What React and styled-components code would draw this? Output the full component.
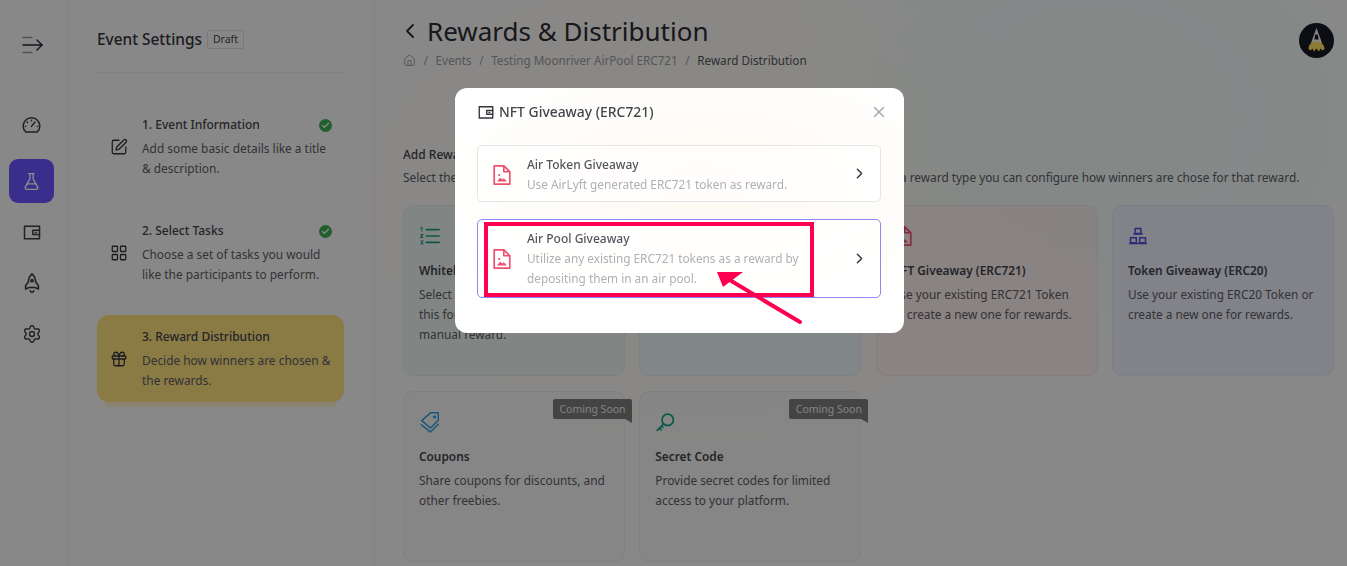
import React from "react";
import styled, { createGlobalStyle } from "styled-components";
import { ChevronLeft, ChevronRight, FlaskConical, Gift, House, LayoutGrid, Settings, SquarePen, Tags, X, Check } from "lucide-react";

const Global = createGlobalStyle`
  html, body { margin: 0; height: 100%; overflow: hidden; }
  body { font-family: "Noto Sans", "Open Sans", sans-serif; color: #2b2b33; background: #f7f7f7; }
  * { box-sizing: border-box; }
`;

const Page = styled.div`
  display: flex; width: 1347px; height: 566px; overflow: hidden;
  background:
    radial-gradient(ellipse 330px 260px at 1090px 120px, #eef8f6 0%, rgba(238,248,246,0) 100%),
    radial-gradient(ellipse 380px 260px at 700px 200px, #fff6ea 0%, rgba(255,246,234,0) 100%),
    #f8f8f8;
`;
const Rail = styled.nav`
  width: 68px; flex: none; border-right: 1px solid #ececec; display: flex; flex-direction: column; align-items: center; padding-top: 33px;
`;
const Toggle = styled.div`height: 24px; color: #20203c; margin-bottom: 46px; margin-left: -4px;`;
const RailItem = styled.div`
  width: 45px; height: 44px; border-radius: 9px; display: flex; align-items: center; justify-content: center; margin-bottom: ${p => (p.$first ? "12px" : "7px")};
  margin-left: -4px;
  color: ${p => (p.$active ? "#fff" : "#3c3c44")};
  background: ${p => (p.$active ? "#6b55ff" : "transparent")};
`;
const Panel = styled.aside`
  width: 307px; flex: none; border-right: 1px solid #ececec; padding: 28px 30px 0 29px;
`;
const PanelHead = styled.div`display: flex; align-items: center; gap: 5px; height: 22px;`;
const PanelTitle = styled.div`font-size: 15.4px; font-weight: 500; color: #33333b;`;
const Draft = styled.span`
  border: 1px solid #dcdcdc; border-radius: 2px; font-size: 10.5px; line-height: 17px; width: 37px; text-align: center; color: #44444c;
`;
const Divider = styled.hr`border: 0; border-top: 1px solid #ececec; margin: 22px 0 30px;`;
const StepList = styled.div`display: flex; flex-direction: column; gap: 19px;`;
const Step = styled.div`
  height: 87px; border-radius: 12px; padding: 0 12px 0 13px; display: flex; align-items: center; gap: 14px;
  background: ${p => (p.$active ? "#fbde7d" : "transparent")};
  box-shadow: ${p => (p.$active ? "0 13px 0 -8px rgba(251,222,125,.35)" : "none")};
  color: #33333b;
`;
const StepBody = styled.div`flex: 1; min-width: 0;`;
const StepTitle = styled.div`
  display: flex; justify-content: space-between; align-items: center; font-size: 12px; font-weight: 500; line-height: 20px; color: #44444c; margin-bottom: 3px;
`;
const StepText = styled.div`font-size: 11.9px; line-height: 20px; color: #5c5c64; white-space: nowrap;`;
const Done = styled.span`
  width: 13px; height: 13px; border-radius: 50%; background: #3fae55; display: inline-flex; align-items: center; justify-content: center; color: #fff;
`;
const Main = styled.main`flex: 1; min-width: 0; padding: 12px 13px 0 28px;`;
const Header = styled.header`display: flex; justify-content: space-between; align-items: flex-start;`;
const TitleRow = styled.div`display: flex; align-items: center; gap: 5px; margin-left: -5px;`;
const Title = styled.h1`margin: 0; font-size: 26px; line-height: 38px; font-weight: 400; color: #2b2b33;`;
const Crumbs = styled.div`display: flex; align-items: center; gap: 7.6px; font-size: 11.7px; line-height: 20px; color: #9a9aa2;`;
const CrumbNow = styled.span`color: #55555d;`;
const Avatar = styled.div`width: 35px; height: 35px; margin-top: 11px;`;
const SectionTitle = styled.div`font-size: 12px; font-weight: 500; line-height: 20px; color: #44444c; margin-top: 75px;`;
const SectionText = styled.div`font-size: 11.85px; line-height: 20px; color: #5c5c64; margin-top: 2px; white-space: nowrap;`;
const Grid = styled.div`
  display: grid; grid-template-columns: repeat(4, 222px); gap: 15px 14.33px; margin-top: 18px;
`;
const Card = styled.div`
  position: relative; height: 171px; padding: 18px 14px 0 15px; border-radius: 10px; border: 1px solid rgba(225,228,232,.7);
  background: ${p => p.$tint};
`;
const CardIcon = styled.div`height: 24px; margin-bottom: 12px; display: flex; align-items: center; color: ${p => p.$color};`;
const CardTitle = styled.div`font-size: 11.85px; font-weight: 600; line-height: 20px; color: #44444c; white-space: nowrap;`;
const CardText = styled.div`font-size: 11.85px; line-height: 20px; color: #5c5c64; margin-top: 4px;`;
const Ribbon = styled.div`
  position: absolute; top: 7px; right: -8px; height: 20px; width: 79px; background: #7c7c7c; border-radius: 2px 2px 0 2px; color: #eee; font-size: 10.5px; line-height: 20px; text-align: center;
  &::after { content: ""; position: absolute; right: 0; top: 20px; border-top: 4px solid #7c7c7c; border-left: 7px solid transparent; }
`;
const Overlay = styled.div`position: fixed; inset: 0; background: rgba(0,0,0,.45);`;
const Modal = styled.section`
  position: absolute; left: 455px; top: 88px; width: 449px; height: 245px; border-radius: 12px; padding: 14px 23px 0;
  background: radial-gradient(ellipse 280px 140px at 55% 40%, #fdf9f2 0%, #fff 100%), #fff;
`;
const ModalHead = styled.div`display: flex; align-items: center; height: 20px; gap: 4px; margin-left: -1px; color: #33333b;`;
const ModalTitle = styled.div`flex: 1; font-size: 13.9px; font-weight: 500; color: #44444c; line-height: 20px;`;
const Close = styled.span`color: #a0a0a8; display: flex; margin-right: -7px;`;
const Options = styled.div`display: flex; flex-direction: column; gap: 17px; margin-top: 23px; margin-left: -1px;`;
const Option = styled.div`
  display: flex; align-items: center; width: 404px; height: ${p => (p.$tall ? "79px" : "57px")}; padding: ${p => (p.$tall ? "0" : "2px")} 13px 0 13px; gap: 14px; border-radius: 5px;
  background: rgba(255,255,255,.7);
  border: 1px solid ${p => (p.$tall ? "#8f86f5" : "#e6e6e6")};
`;
const OptionIcon = styled.span`color: #ee4f6d; display: flex;`;
const OptionBody = styled.div`flex: 1; min-width: 0;`;
const OptionTitle = styled.div`font-size: 12px; font-weight: 500; line-height: 20px; color: #55555d;`;
const OptionText = styled.div`font-size: 11.8px; line-height: 19.5px; color: #b0b0b4;`;
const Next = styled.span`color: #33333b; display: flex; margin-top: ${p => (p.$up ? "-3px" : "-1px")}; margin-right: -1px;`;
const Mark = styled.div`
  position: absolute; left: 29px; top: 134px; width: 330px; height: 75px; border: 4px solid #ff0050;
`;
const Arrow = styled.svg`position: absolute; left: 0; top: 0; pointer-events: none;`;

const Stroke = ({ size = 20, children, w = 1.6 }) => (
  <svg width={size} height={size} viewBox="0 0 24 24" fill="none" stroke="currentColor" strokeWidth={w} strokeLinecap="round" strokeLinejoin="round">{children}</svg>
);
const WalletIcon = ({ size = 20, w = 1.8 }) => (
  <Stroke size={size} w={w}><path d="M3 5h18v15H3z" /><path d="M21 10h-8v5h8" /><path d="M16 12.5h1" /></Stroke>
);
const GaugeIcon = () => (
  <Stroke size={21} w={1.7}><path d="M5.5 19.5A9.5 9.5 0 1 1 18.5 19.5z" /><path d="M12 13l4-5" /><path d="M12 6v.5M7 8l.5.5M5 13h.5M18.5 13h.5" /></Stroke>
);
const RocketIcon = () => (
  <Stroke size={22} w={1.7}>
    <path d="M12 2c3 2.8 4 6 4 9l3 4v3.5l-4-1.5H9l-4 1.5V15l3-4c0-3 1-6.2 4-9z" />
    <circle cx="12" cy="9.5" r="1.2" />
    <path d="M10 20.5c.5 1.2 1.200 1.700 2 1.700s1.500-.5 2-1.700" />
  </Stroke>
);
const FileImageIcon = ({ size = 22 }) => (
  <svg width={size} height={size} viewBox="0 0 24 24" fill="none" stroke="currentColor" strokeWidth="1.8" strokeLinejoin="round">
    <path d="M3.500 2h10.500l6.500 6.500V22h-17z" />
    <path d="M14 2v6.500h6.500" />
    <circle cx="9" cy="12" r="1.200" fill="currentColor" stroke="none" />
    <path d="M6.500 19l3.500-4 2.500 2 1.500-1.500 3.500 3.500z" fill="currentColor" stroke="none" />
  </svg>
);
const ToggleIcon = () => (
  <svg width="24" height="24" viewBox="0 0 24 24" fill="none" stroke="currentColor" strokeWidth="1.4" strokeLinecap="round">
    <path d="M3 4.5h9" opacity=".45" /><path d="M3 12h19" /><path d="M17 7l5 5-5 5" /><path d="M3 19.5h9" opacity=".45" />
  </svg>
);
const TokensIcon = () => (
  <Stroke size={20} w={1.8}><path d="M8.5 3h7v6h-7zM3 14h7v6H3zM14 14h7v6h-7z" /><path d="M2 21h20M7 9.5h10" /></Stroke>
);
const ListIcon = () => (
  <svg width="22" height="22" viewBox="0 0 24 24" fill="none" stroke="currentColor" strokeWidth="1.8" strokeLinecap="round">
    <path d="M8 5h14M8 12h14M8 19h14" /><path d="M2 3.5l1.2-.8v4M1.8 10.5h2.4l-2.4 3h2.4M1.8 17.5h2.4l-1.2 1.5 1.2 1.5H1.8" strokeWidth="1.1" />
  </svg>
);
const CouponIcon = () => (
  <Stroke size={22} w={1.6}>
    <path d="M3 10.5L12.5 2H21v8l-8.5 8.500z" />
    <circle cx="17" cy="6.5" r="1" />
    <path d="M2.500 15l10 8L21 14.500" />
  </Stroke>
);
const KeyIcon = () => (
  <Stroke size={21} w={2}><circle cx="14.5" cy="9" r="6.5" /><path d="M9.5 14L2.5 21M5 18.5l2 2M7.5 16l1.500 1.500" /></Stroke>
);
const Logo = () => (
  <svg width="35" height="35" viewBox="0 0 35 35">
    <circle cx="17.5" cy="17.5" r="17.5" fill="#171a24" />
    <path d="M17.5 5l5.500 15h-11z" fill="#f4f4f4" />
    <path d="M16.300 11.500h2.400l1 5h-4.400z" fill="#171a24" />
    <path d="M9.500 26c0-4 3-7.500 8-7.500s8 3.500 8 7.500l-2 1.500-2-2-1.500 3-2.500-3-2.500 3-1.500-3-2 2z" fill="#ffe060" />
  </svg>
);

const steps = [
  { t: "1. Event Information", d: ["Add some basic details like a title", "& description."], i: <SquarePen size={18} strokeWidth={1.7} />, ok: true },
  { t: "2. Select Tasks", d: ["Choose a set of tasks you would", "like the participants to perform."], i: <LayoutGrid size={18} strokeWidth={1.7} />, ok: true },
  { t: "3. Reward Distribution", d: ["Decide how winners are chosen &", "the rewards."], i: <Gift size={18} strokeWidth={1.7} />, active: true },
];
const cards = [
  { t: "Whitelist", d: "Select winners from a list using this form to allocate them a manual reward.", i: <ListIcon />, c: "#1f9c88", tint: "rgba(226,243,238,.6)" },
  { t: "Discord Role", d: "Reward your community with a Discord role.", i: <Tags size={22} />, c: "#1f9c88", tint: "rgba(226,241,248,.6)" },
  { t: "NFT Giveaway (ERC721)", d: "Use your existing ERC721 Token or create a new one for rewards.", i: <FileImageIcon />, c: "#ee4f6d", tint: "rgba(252,232,232,.6)" },
  { t: "Token Giveaway (ERC20)", d: "Use your existing ERC20 Token or create a new one for rewards.", i: <TokensIcon />, c: "#4f4fd8", tint: "rgba(232,234,250,.7)" },
  { t: "Coupons", d: "Share coupons for discounts, and other freebies.", i: <CouponIcon />, c: "#2f9ee0", tint: "rgba(240,240,240,.5)", soon: true },
  { t: "Secret Code", d: "Provide secret codes for limited access to your platform.", i: <KeyIcon />, c: "#12a085", tint: "rgba(240,240,240,.5)", soon: true },
];

export default function App() {
  return (
    <>
      <Global />
      <Page>
        <Rail>
          <Toggle><ToggleIcon /></Toggle>
          <RailItem $first><GaugeIcon /></RailItem>
          <RailItem $active><FlaskConical size={19} strokeWidth={1.7} /></RailItem>
          <RailItem><WalletIcon /></RailItem>
          <RailItem><RocketIcon /></RailItem>
          <RailItem><Settings size={20} strokeWidth={1.7} /></RailItem>
        </Rail>
        <Panel>
          <PanelHead><PanelTitle>Event Settings</PanelTitle><Draft>Draft</Draft></PanelHead>
          <Divider />
          <StepList>
            {steps.map(s => (
              <Step key={s.t} $active={s.active}>
                {s.i}
                <StepBody>
                  <StepTitle>{s.t}{s.ok && <Done><Check size={9} strokeWidth={3} /></Done>}</StepTitle>
                  <StepText>{s.d[0]}<br />{s.d[1]}</StepText>
                </StepBody>
              </Step>
            ))}
          </StepList>
        </Panel>
        <Main>
          <Header>
            <div>
              <TitleRow><ChevronLeft size={24} strokeWidth={1.8} /><Title>Rewards &amp; Distribution</Title></TitleRow>
              <Crumbs>
                <House size={13} strokeWidth={1.7} /><span>/</span><span>Events</span><span>/</span>
                <span>Testing Moonriver AirPool ERC721</span><span>/</span><CrumbNow>Reward Distribution</CrumbNow>
              </Crumbs>
            </div>
            <Avatar><Logo /></Avatar>
          </Header>
          <SectionTitle>Add Rewards</SectionTitle>
          <SectionText>Select the type of reward you want to give to the participants of the event. After selecting a reward type you can configure how winners are chose for that reward.</SectionText>
          <Grid>
            {cards.map(c => (
              <Card key={c.t} $tint={c.tint}>
                {c.soon && <Ribbon>Coming Soon</Ribbon>}
                <CardIcon $color={c.c}>{c.i}</CardIcon>
                <CardTitle>{c.t}</CardTitle>
                <CardText>{c.d}</CardText>
              </Card>
            ))}
          </Grid>
        </Main>
      </Page>
      <Overlay>
        <Modal>
          <ModalHead>
            <WalletIcon size={18} />
            <ModalTitle>NFT Giveaway (ERC721)</ModalTitle>
            <Close><X size={18} strokeWidth={1.6} /></Close>
          </ModalHead>
          <Options>
            <Option>
              <OptionIcon><FileImageIcon /></OptionIcon>
              <OptionBody>
                <OptionTitle>Air Token Giveaway</OptionTitle>
                <OptionText>Use AirLyft generated ERC721 token as reward.</OptionText>
              </OptionBody>
              <Next $up><ChevronRight size={17} strokeWidth={2} /></Next>
            </Option>
            <Option $tall>
              <OptionIcon><FileImageIcon /></OptionIcon>
              <OptionBody>
                <OptionTitle>Air Pool Giveaway</OptionTitle>
                <OptionText>Utilize any existing ERC721 tokens as a reward by<br />depositing them in an air pool.</OptionText>
              </OptionBody>
              <Next><ChevronRight size={17} strokeWidth={2} /></Next>
            </Option>
          </Options>
          <Mark />
          <Arrow width="449" height="245" viewBox="0 0 449 245" fill="none">
            <path d="M345 234L268 188" stroke="#ff0050" strokeWidth="4" strokeLinecap="round" />
            <path d="M262 184L288 184L268 199z" fill="#ff0050" />
          </Arrow>
        </Modal>
      </Overlay>
    </>
  );
}
